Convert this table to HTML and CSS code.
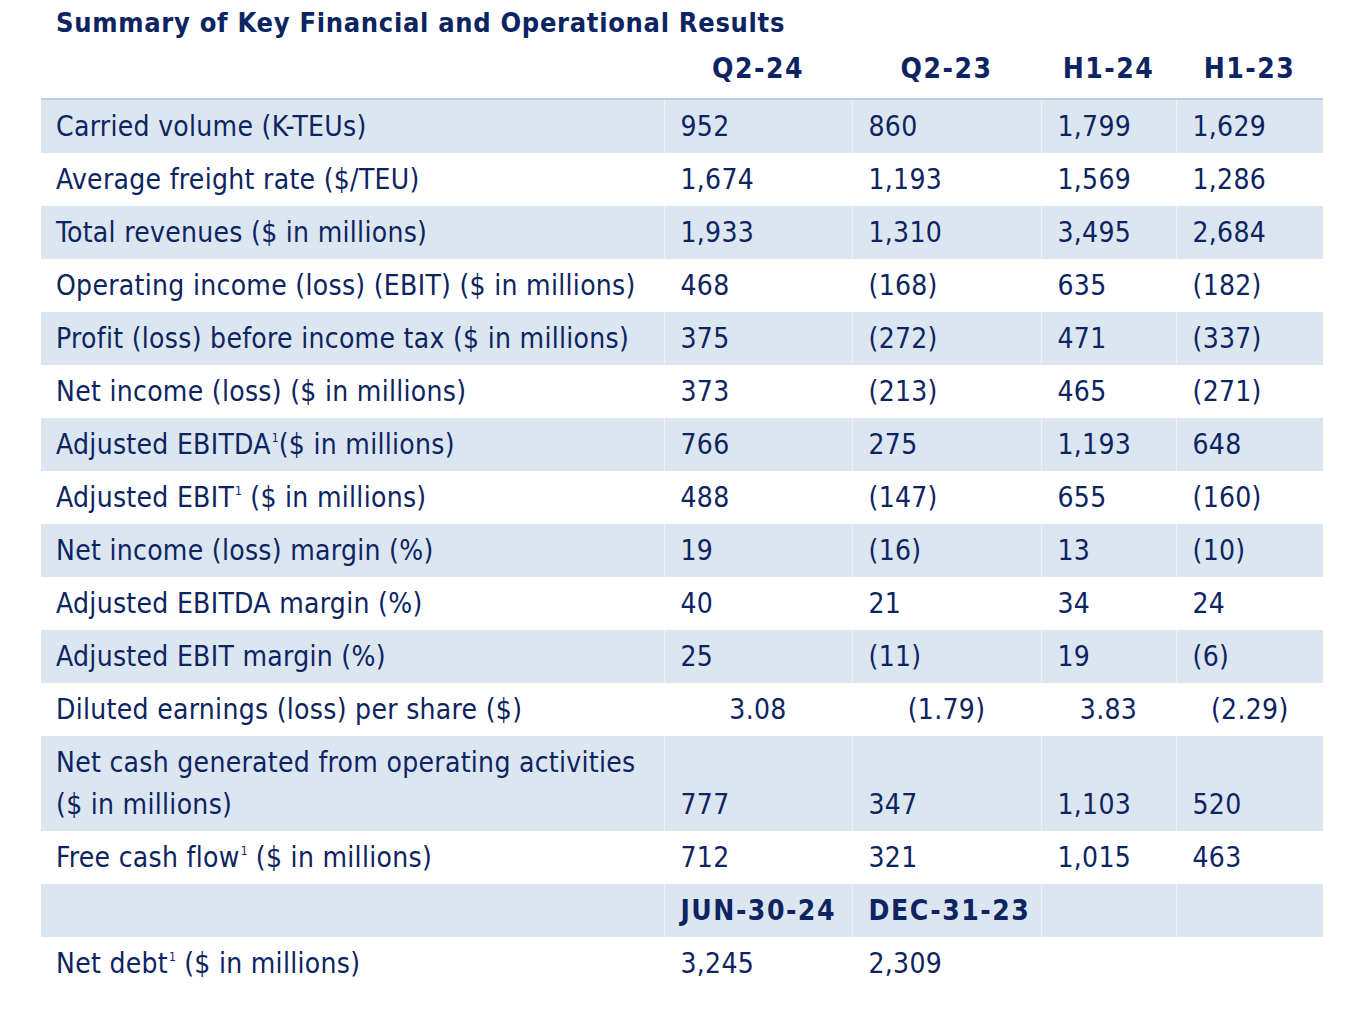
FILE: index.html
```html
<!DOCTYPE html>
<html>
<head>
<meta charset="utf-8">
<link rel="stylesheet" href="styles.css">
</head>
<body>
<div class="page">
  <h1 class="title">Summary of Key Financial and Operational Results</h1>
  <table class="results">
    <colgroup>
      <col class="c-label"><col class="c-q24"><col class="c-q23"><col class="c-h24"><col class="c-h23">
    </colgroup>
    <thead>
      <tr class="head">
        <th></th><th>Q2-24</th><th>Q2-23</th><th>H1-24</th><th>H1-23</th>
      </tr>
    </thead>
    <tbody>
      <tr class="shade"><td>Carried volume (K-TEUs)</td><td>952</td><td>860</td><td>1,799</td><td>1,629</td></tr>
      <tr><td>Average freight rate ($/TEU)</td><td>1,674</td><td>1,193</td><td>1,569</td><td>1,286</td></tr>
      <tr class="shade"><td>Total revenues ($ in millions)</td><td>1,933</td><td>1,310</td><td>3,495</td><td>2,684</td></tr>
      <tr><td>Operating income (loss) (EBIT) ($ in millions)</td><td>468</td><td>(168)</td><td>635</td><td>(182)</td></tr>
      <tr class="shade"><td>Profit (loss) before income tax ($ in millions)</td><td>375</td><td>(272)</td><td>471</td><td>(337)</td></tr>
      <tr><td>Net income (loss) ($ in millions)</td><td>373</td><td>(213)</td><td>465</td><td>(271)</td></tr>
      <tr class="shade"><td>Adjusted EBITDA<sup>1</sup>($ in millions)</td><td>766</td><td>275</td><td>1,193</td><td>648</td></tr>
      <tr><td>Adjusted EBIT<sup>1</sup> ($ in millions)</td><td>488</td><td>(147)</td><td>655</td><td>(160)</td></tr>
      <tr class="shade"><td>Net income (loss) margin (%)</td><td>19</td><td>(16)</td><td>13</td><td>(10)</td></tr>
      <tr><td>Adjusted EBITDA margin (%)</td><td>40</td><td>21</td><td>34</td><td>24</td></tr>
      <tr class="shade"><td>Adjusted EBIT margin (%)</td><td>25</td><td>(11)</td><td>19</td><td>(6)</td></tr>
      <tr class="center"><td>Diluted earnings (loss) per share ($)</td><td>3.08</td><td>(1.79)</td><td>3.83</td><td>(2.29)</td></tr>
      <tr class="shade bottom"><td>Net cash generated from operating activities<br>($ in millions)</td><td>777</td><td>347</td><td>1,103</td><td>520</td></tr>
      <tr><td>Free cash flow<sup>1</sup> ($ in millions)</td><td>712</td><td>321</td><td>1,015</td><td>463</td></tr>
      <tr class="shade dates"><td></td><td>JUN-30-24</td><td>DEC-31-23</td><td></td><td></td></tr>
      <tr><td>Net debt<sup>1</sup> ($ in millions)</td><td>3,245</td><td>2,309</td><td></td><td></td></tr>
    </tbody>
  </table>
</div>
</body>
</html>
```

FILE: styles.css
```css
html, body {
  margin: 0;
  padding: 0;
  background: #ffffff;
}

body {
  font-family: "DejaVu Sans Condensed", "DejaVu Sans", sans-serif;
  color: #0c2461;
}

.page {
  padding: 0 0 0 41px;
}

.title {
  margin: 0;
  padding: 5px 0 0 15px;
  font-size: 27px;
  letter-spacing: 0.7px;
  line-height: 35px;
  font-weight: bold;
  color: #0c2461;
}

.results {
  table-layout: fixed;
  width: 1282px;
  border-collapse: collapse;
  font-size: 28px;
  letter-spacing: 0.3px;
}

.c-label { width: 623px; }
.c-q24 { width: 188px; }
.c-q23 { width: 189px; }
.c-h24 { width: 135px; }
.c-h23 { width: 147px; }

.head th {
  height: 58px;
  padding: 0;
  font-weight: bold;
  letter-spacing: 1.5px;
  text-align: center;
  vertical-align: middle;
  line-height: 58px;
  border-bottom: 2px solid #b8cce4;
}

.results td {
  padding: 6px 0 5px 16px;
  line-height: 42px;
  height: 42px;
  text-align: left;
  vertical-align: middle;
  white-space: nowrap;
  border-left: 1px solid rgba(255, 255, 255, 0.5);
}

.results td:first-child {
  padding-left: 15px;
  border-left: none;
}

.shade td {
  background: #dce6f1;
}

.center td:not(:first-child) {
  text-align: center;
  padding-left: 0;
}

.bottom td {
  vertical-align: bottom;
}

.dates td {
  font-weight: bold;
  letter-spacing: 1.5px;
}

sup {
  font-size: 12px;
  line-height: 0;
  letter-spacing: 0;
  vertical-align: 12px;
  margin-left: 1px;
}
```
